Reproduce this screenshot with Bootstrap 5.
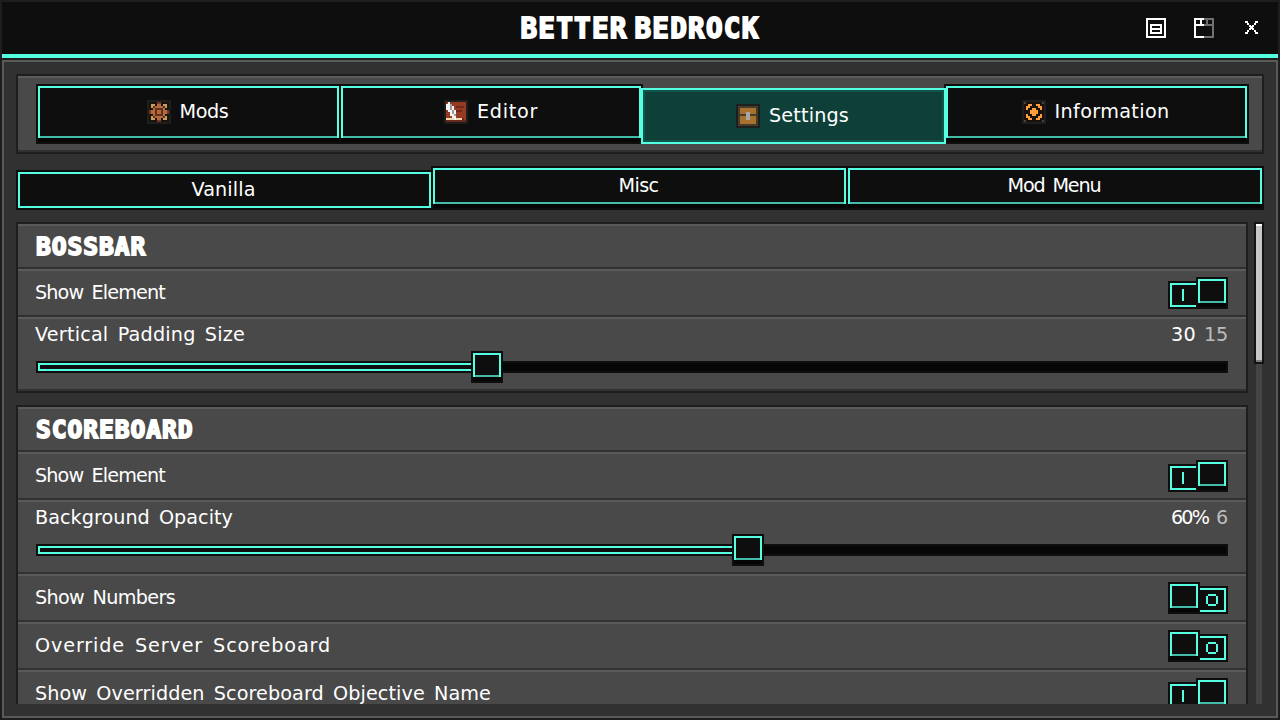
<!DOCTYPE html>
<html lang="en">
<head>
<meta charset="utf-8">
<meta name="viewport" content="width=device-width, initial-scale=1">
<title>Better Bedrock</title>
<link href="https://cdn.jsdelivr.net/npm/bootstrap@5.3.0/dist/css/bootstrap.min.css" rel="stylesheet">
<style>
:root{--teal:#55ffe1;--dim:#44bba8;--ink:#0e0e0e;--edge:#1e1e1e;--hi:#5a5a5a;--panel:#494949;--base:#313131}
body{width:1280px;height:720px;background:var(--base);color:#fff;font-family:"DejaVu Sans",sans-serif;font-size:19.2px;line-height:20px}
.frame{width:1280px;height:720px;border:2px solid var(--edge)}
.topbar{height:58px;background:var(--ink);border-bottom:2px solid var(--edge);box-shadow:inset 0 -4px 0 var(--teal);padding:0 18px 4px}
.block-type{font-family:"DejaVu Sans Mono",monospace;font-weight:700;-webkit-text-stroke:1.8px #fff;white-space:nowrap}
.topbar h1{font-size:27.6px;line-height:54px;letter-spacing:1.25px;word-spacing:-11px}
.tools{right:20px;top:16px;height:20px}
.tools svg{display:block}
.main{border:2px solid var(--hi);padding:12px}
.strip{height:80px;border:2px solid var(--edge);background:var(--panel);box-shadow:inset 0 2px 0 var(--hi),inset 0 -2px 0 var(--base);padding:10px 15px 0 20px}
.key{background:var(--ink);border:solid var(--teal);border-width:2px 2px 0;box-shadow:inset 0 -2px 0 var(--dim),0 4px 0 #060606,0 0 0 2px var(--ink),0 4px 0 2px var(--ink)}
.tabs-main{display:grid;grid-template-columns:301px 300px 305px 301px}
.tabs-main .key{height:52px;gap:9px;padding:0 2px 2px 0}
.tabs-main .shifted{margin-left:2px;margin-right:-2px}
.tabs-main .key.shifted:nth-child(2){padding-right:0}
.tabs-main .key.chosen{height:56px;margin-top:2px;border-width:2px;background:#0e3f38;box-shadow:inset 0 0 0 2px #12554b;z-index:1;padding:0 2px 0 0}
.tabs-sub{display:grid;grid-template-columns:413px 413px 414px;column-gap:2px;margin:14px 2px 0;height:42px}
.tabs-sub .key{height:36px;padding:0 2px 2px 0}
.tabs-sub .key.chosen{margin-top:4px;border-width:2px;padding-bottom:0;box-shadow:0 0 0 2px var(--ink)}
.lbl{white-space:nowrap;display:inline-block;height:20px;word-spacing:3px}
.view{height:482px;margin-top:12px}
.list{width:1232px}
.group{border:2px solid var(--edge);background:var(--panel);margin-bottom:12px}
.group>div{box-shadow:inset 0 2px 0 var(--hi),inset 0 -2px 0 var(--base);padding:0 18px 0 17px}
.cap{height:45px}
.cap h2{font-size:24.6px;line-height:45px;letter-spacing:.95px;padding-left:1px}
.opt{height:48px;padding-top:8px!important}
.opt .lbl{margin-top:6px}
.rng{height:74px;padding-top:8px!important}
.flip{width:60px;height:32px}
.flip .slot{width:26px;height:24px;background:var(--ink);border:2px solid var(--teal);box-shadow:0 0 0 2px var(--ink);margin-top:6px;margin-left:2px}
.flip .knob{width:28px;height:24px;margin-top:2px;margin-left:2px;position:relative}
.flip.on .slot{border-right:0}
.flip.off .slot{border-left:0}
.rail{height:12px;background:#060606;border:2px solid var(--ink);margin-top:16px;margin-left:1px}
.fill{height:8px;background:var(--ink);border:2px solid var(--teal);border-right:0}
.grip{width:28px;height:24px;top:-10px}
.soft{color:#bcbcbc}
.scroller{width:10px;margin-left:6px}
.track{left:2px;width:6px;top:0;bottom:0;background:#454545}
.thumb{width:10px;height:142px;background:#c7c7c7;border:2px solid #131313;box-shadow:inset 0 2px 0 #fff,inset 0 -2px 0 #7c7c7c}
</style>
</head>
<body class="overflow-hidden">
<div class="frame d-flex flex-column">
  <header class="topbar position-relative d-flex justify-content-center">
    <h1 class="block-type m-0">BETTER BEDROCK</h1>
    <div class="tools position-absolute d-flex">
      <svg width="20" height="20" viewBox="0 0 10 10" shape-rendering="crispEdges" fill="#fff" fill-rule="evenodd"><path d="M0 0H10V10H0ZM1 1V9H9V1ZM2 3H8V8H2ZM3 4V5H7V4ZM3 6V7H7V6Z"/></svg>
      <svg style="margin-left:28px" width="20" height="20" viewBox="0 0 10 10" shape-rendering="crispEdges" fill-rule="evenodd"><path fill="#707070" d="M5 0H10V10H5V9H9V4H5V3H6V1H5ZM7 1V3H9V1Z"/><path fill="#fff" d="M0 0H5V4H1V9H5V10H0ZM1 1V3H3V1ZM4 1V3H5V1Z"/></svg>
      <svg style="margin-left:31px;margin-top:3px" width="13" height="13" viewBox="0 0 13 13" shape-rendering="crispEdges" fill="#fff"><path d="M0 0h3v2h-3zM10 0h3v2h-3zM2 2h2v2h-2zM9 2h2v2h-2zM4 4h2v2h-2zM7 4h2v2h-2zM5 5h3v3h-3zM4 7h2v2h-2zM7 7h2v2h-2zM2 9h2v2h-2zM9 9h2v2h-2zM0 11h3v2h-3zM10 11h3v2h-3z"/></svg>
    </div>
  </header>
  <main class="main flex-grow-1">
    <nav class="strip">
      <div class="tabs-main">
        <a class="key d-flex align-items-center justify-content-center text-reset text-decoration-none"><i data-px="cog"></i><span class="lbl" data-w="49">Mods</span></a>
        <a class="key shifted d-flex align-items-center justify-content-center text-reset text-decoration-none"><i data-px="quill"></i><span class="lbl" data-w="61">Editor</span></a>
        <a class="key shifted chosen position-relative d-flex align-items-center justify-content-center text-reset text-decoration-none"><i data-px="chest"></i><span class="lbl" data-w="80">Settings</span></a>
        <a class="key shifted d-flex align-items-center justify-content-center text-reset text-decoration-none"><i data-px="info"></i><span class="lbl" data-w="115">Information</span></a>
      </div>
    </nav>
    <nav class="tabs-sub">
      <a class="key chosen d-flex align-items-center justify-content-center text-reset text-decoration-none"><span class="lbl" data-w="64">Vanilla</span></a>
      <a class="key d-flex align-items-center justify-content-center text-reset text-decoration-none"><span class="lbl" data-w="40">Misc</span></a>
      <a class="key d-flex align-items-center justify-content-center text-reset text-decoration-none"><span class="lbl" data-w="93">Mod Menu</span></a>
    </nav>
    <div class="view d-flex overflow-hidden">
      <div class="list">
        <section class="group">
          <div class="cap"><h2 class="block-type m-0">BOSSBAR</h2></div>
          <div class="opt d-flex justify-content-between"><span class="lbl" data-w="130">Show Element</span><span class="flip on d-flex"><span class="slot"><svg class="d-block" width="24" height="20" shape-rendering="crispEdges"><path fill="#55ffe1" d="M10 4h2v12h-2z"/></svg></span><span class="knob key"></span></span></div>
          <div class="rng"><div class="d-flex justify-content-between"><span class="lbl" data-w="210">Vertical Padding Size</span><span class="d-flex gap-2"><span class="lbl" data-w="25">30</span><span class="lbl soft" data-w="24">15</span></span></div><div class="rail position-relative"><div class="fill" style="width:433px"></div><span class="grip key position-absolute" style="left:435px"></span></div></div>
        </section>
        <section class="group">
          <div class="cap"><h2 class="block-type m-0">SCOREBOARD</h2></div>
          <div class="opt d-flex justify-content-between"><span class="lbl" data-w="130">Show Element</span><span class="flip on d-flex"><span class="slot"><svg class="d-block" width="24" height="20" shape-rendering="crispEdges"><path fill="#55ffe1" d="M10 4h2v12h-2z"/></svg></span><span class="knob key"></span></span></div>
          <div class="rng"><div class="d-flex justify-content-between"><span class="lbl" data-w="198">Background Opacity</span><span class="d-flex gap-2"><span class="lbl" data-w="37">60%</span><span class="lbl soft" data-w="12">6</span></span></div><div class="rail position-relative"><div class="fill" style="width:694px"></div><span class="grip key position-absolute" style="left:696px"></span></div></div>
          <div class="opt d-flex justify-content-between"><span class="lbl" data-w="140">Show Numbers</span><span class="flip off d-flex"><span class="knob key"></span><span class="slot"><svg class="d-block" width="24" height="20" shape-rendering="crispEdges"><path fill="#55ffe1" d="M8 4h8v2h-8zM8 14h8v2h-8zM6 6h2v8h-2zM16 6h2v8h-2z"/></svg></span></span></div>
          <div class="opt d-flex justify-content-between"><span class="lbl" data-w="296">Override Server Scoreboard</span><span class="flip off d-flex"><span class="knob key"></span><span class="slot"><svg class="d-block" width="24" height="20" shape-rendering="crispEdges"><path fill="#55ffe1" d="M8 4h8v2h-8zM8 14h8v2h-8zM6 6h2v8h-2zM16 6h2v8h-2z"/></svg></span></span></div>
          <div class="opt d-flex justify-content-between"><span class="lbl" data-w="456">Show Overridden Scoreboard Objective Name</span><span class="flip on d-flex"><span class="slot"><svg class="d-block" width="24" height="20" shape-rendering="crispEdges"><path fill="#55ffe1" d="M10 4h2v12h-2z"/></svg></span><span class="knob key"></span></span></div>
        </section>
      </div>
      <div class="scroller position-relative"><div class="track position-absolute"></div><div class="thumb position-relative"></div></div>
    </div>
  </main>
</div>
<script src="https://cdn.jsdelivr.net/npm/bootstrap@5.3.0/dist/js/bootstrap.bundle.min.js"></script>
<script>
// 12x12 pixel icons, one character per cell
const inks={e:'#1e1e1e',k:'#1a140e',r:'#74391f',o:'#b5683a',t:'#c99d62',d:'#5c331d',b:'#963b22',m:'#6b2a1b',w:'#f4f4f4',g:'#9a9a9a',c:'#f0d9b0',x:'#443c2c',y:'#a8712c',l:'#a6a6a6',f:'#ff9f3c',n:'#1a100c',q:'#4b443c'};
const icons={
cog:['eeeeeeeeeeee','ekkkkrrkkkke','ekttkookttke','ektdoooodtke','ekkoddddokke','eroodoodoore','eroodoodoore','ekkoddddokke','ektdoooodtke','ekttkookttke','ekkkkrrkkkke','eeeeeeeeeeee'],
quill:['eeeeeeeeeeee','ebwbbbbbbbbe','ewwgbbbbbbbe','ewwgwbmmmmbe','ewwgwbbbbbbe','ebwwgwmmmbbe','ebbwgwbbbbbe','ebbwwgbbbbbe','ebbbwwbbbbbe','eccccwcccmbe','emmmmmmmmmme','eeeeeeeeeeee'],
chest:['eeeeeeeeeeee','exxxxxxxxxxe','exyyyyyyyyxe','exyyyyyyyyxe','exyyyllyyyxe','exxxxllxxxxe','exyyyllyyyxe','exyyyllyyyxe','exyyyyyyyyxe','exyyyyyyyyxe','exxxxxxxxxxe','eeeeeeeeeeee'],
info:['eeeeeeeeeeee','eqnnnnnnnnqe','ennffnnffnne','enffnnnnffne','enfnnffnnfne','ennnffffnnne','ennnffffnnne','enfnnffnnfne','enffnnnnffne','ennffnnffnne','eqnnnnnnnnqe','eeeeeeeeeeee']};
document.querySelectorAll('[data-px]').forEach(i=>{
  let s='';icons[i.dataset.px].forEach((row,y)=>[...row].forEach((c,x)=>s+=`<rect x="${x}" y="${y}" width="1" height="1" fill="${inks[c]}"/>`));
  i.className='d-flex';i.innerHTML=`<svg width="24" height="24" viewBox="0 0 12 12" shape-rendering="crispEdges">${s}</svg>`;
});
document.querySelectorAll('[data-w]').forEach(l=>{
  const w=+l.dataset.w;l.style.letterSpacing=(w-l.getBoundingClientRect().width)/l.textContent.length+'px';
});
</script>
</body>
</html>
